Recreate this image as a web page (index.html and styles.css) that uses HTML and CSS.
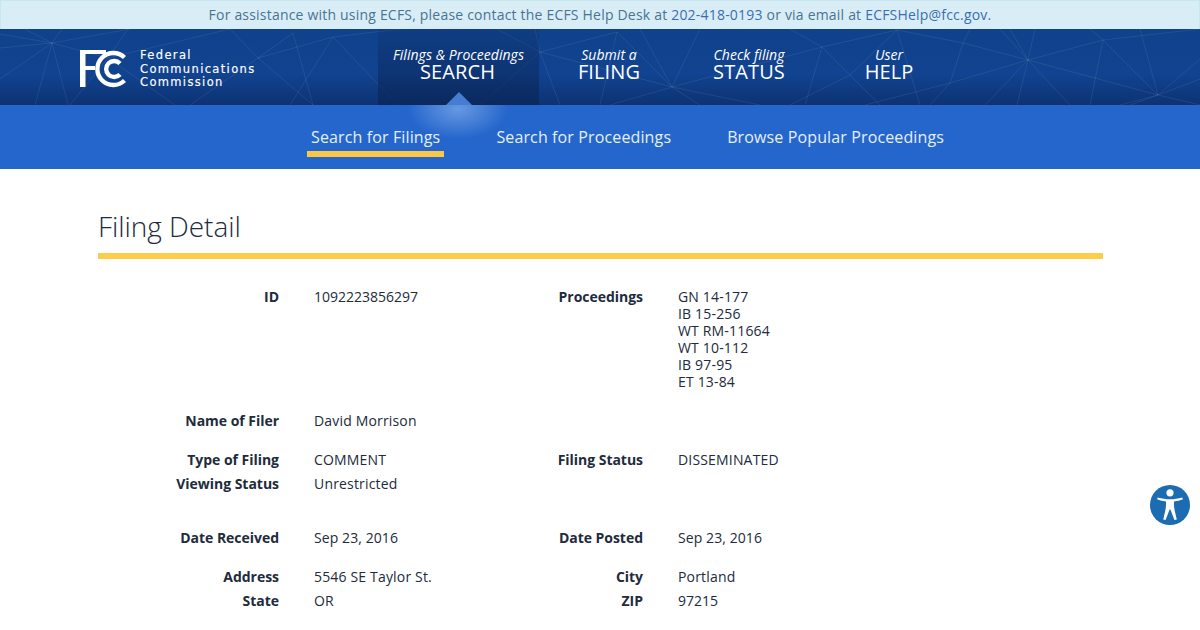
FILE: index.html
```html
<!DOCTYPE html>
<html>
  <head>
    <title>ECFS Filing Detail</title>
    <link rel="stylesheet" href="styles.css">
  </head>

  <body>
    <div class="help-bar">
      For assistance with using ECFS, please contact the ECFS Help Desk at <a href="#">202-418-0193</a> or via email at <a href="#">ECFSHelp@fcc.gov</a>.
    </div>

    <header class="top">
      <svg class="web" width="1200" height="76" viewBox="0 0 1200 76">
        <path d="M0 19 L52 14 L0 5 M52 14 L25 0 M52 14 L62 0 M52 14 L130 0 M52 14 L0 50 M52 14 L35 76 M52 14 L68 76 M52 14 L108 29 L70 76 M108 29 L128 0 M108 29 L175 76 M108 29 L230 0 M258 29 L230 0 M258 29 L293 4 M258 29 L333 8 M258 29 L190 76 M258 29 L313 76 M293 4 L313 76 M333 8 L290 76 M333 8 L398 76 M333 8 L400 0 M540 23 L497 0 M540 23 L617 3 M540 23 L672 58 M540 23 L480 76 M540 23 L560 76 M540 23 L535 0 M617 3 L672 58 M617 3 L600 76 M672 58 L700 0 M672 58 L640 0 M672 58 L610 76 M672 58 L700 76 M672 58 L760 76 M672 58 L822 18 M822 18 L790 0 M822 18 L897 1 M822 18 L850 46 M822 18 L805 76 M850 46 L897 1 M850 46 L790 76 M850 46 L880 76 M897 1 L920 76 M963 14 L897 1 M963 14 L950 54 M963 14 L970 0 M963 14 L1028 31 M950 54 L1028 31 M950 54 L930 76 M950 54 L865 76 M1028 31 L1010 0 M1028 31 L1035 0 M1028 31 L1000 0 M1028 31 L985 76 M1028 31 L1017 76 M1028 31 L1070 76 M1028 31 L1158 66 M1028 31 L1103 11 M1103 11 L1090 0 M1103 11 L1158 66 M1103 11 L1090 76 M1103 11 L1200 0 M1158 66 L1140 0 M1158 66 L1200 30 M1158 66 L1200 50 M1158 66 L1200 76 M1158 66 L1130 76 M1158 66 L1120 76"/>
      </svg>

      <div class="logo">
        <svg class="logo-mark" width="46" height="38" viewBox="0 0 46 38">
          <path class="logo-f" d="M0 0 H26 V4 H5.5 V16 H15 V20 H5.5 V37 H0 Z"/>
          <path class="logo-c" d="M44.5 7.5 A16 16 0 1 0 44.5 30.5"/>
          <path class="logo-c" d="M40 13.5 A8 8 0 1 0 40 24.5"/>
        </svg>
        <div class="logo-text">Federal<br>Communications<br>Commission</div>
      </div>

      <nav class="main-nav">
        <a class="main-tab main-tab-active" href="#"><i>Filings &amp; Proceedings</i><span>SEARCH</span></a>
        <a class="main-tab" href="#"><i>Submit a</i><span>FILING</span></a>
        <a class="main-tab" href="#"><i>Check filing</i><span>STATUS</span></a>
        <a class="main-tab" href="#"><i>User</i><span>HELP</span></a>
      </nav>
    </header>

    <nav class="sub-nav">
      <div class="sub-glow"></div>
      <a class="sub-link sub-link-active" href="#">Search for Filings</a>
      <a class="sub-link" href="#">Search for Proceedings</a>
      <a class="sub-link" href="#">Browse Popular Proceedings</a>
    </nav>

    <main class="content">
      <h1>Filing Detail</h1>

      <div class="details">
        <div class="label">ID</div>
        <div class="value num">1092223856297</div>
        <div class="label">Proceedings</div>
        <div class="value">GN 14-177<br>IB 15-256<br>WT RM-11664<br>WT 10-112<br>IB 97-95<br>ET 13-84</div>

        <div class="label gap-top">Name of Filer</div>
        <div class="value gap-top wide">David Morrison</div>

        <div class="label gap-top">Type of Filing</div>
        <div class="value gap-top">COMMENT</div>
        <div class="label gap-top">Filing Status</div>
        <div class="value gap-top">DISSEMINATED</div>

        <div class="label">Viewing Status</div>
        <div class="value wide">Unrestricted</div>

        <div class="label gap-big">Date Received</div>
        <div class="value date gap-big">Sep 23, 2016</div>
        <div class="label gap-big">Date Posted</div>
        <div class="value date gap-big">Sep 23, 2016</div>

        <div class="label gap-top">Address</div>
        <div class="value gap-top">5546 SE Taylor St.</div>
        <div class="label gap-top">City</div>
        <div class="value gap-top">Portland</div>

        <div class="label">State</div>
        <div class="value">OR</div>
        <div class="label">ZIP</div>
        <div class="value num">97215</div>
      </div>
    </main>

    <svg class="access" width="42" height="42" viewBox="0 0 42 42">
      <circle cx="21" cy="21" r="20.5" fill="#fff"/>
      <circle cx="21" cy="21" r="20" fill="#1b6cb0"/>
      <circle cx="21" cy="8.8" r="3.6" fill="#fff"/>
      <path fill="#fff" d="M8 15.2 L8.8 13.4 C13 14.6 17 15.2 21 15.2 C25 15.2 29 14.6 33.2 13.4 L34 15.2 C31 16.4 28 17.2 25 17.6 C24.8 21 25.2 24.5 25.8 27 L27.8 35.4 L25.4 36 L21.4 25.5 H20.6 L16.6 36 L14.2 35.4 L16.2 27 C16.8 24.5 17.2 21 17 17.6 C14 17.2 11 16.4 8 15.2 Z"/>
    </svg>
  </body>
</html>
```

FILE: styles.css
```css
body {
  margin: 0;
  height: 630px;
  overflow: hidden;
  position: relative;
  background: #fff;
  font-family: 'Open Sans', sans-serif;
  font-size: 14px;
  color: #212b3c;
}

a {
  text-decoration: none;
}

.help-bar {
  height: 29px;
  box-sizing: border-box;
  border: 1px solid #c6e6f0;
  border-bottom: none;
  background: #d9edf7;
  color: #4a7391;
  line-height: 28px;
  letter-spacing: 0.2px;
  text-align: center;
}

.help-bar a {
  color: #3a6eb0;
}

.top {
  position: relative;
  display: flex;
  height: 76px;
  padding-left: 80px;
  background: linear-gradient(#10418b, #114390 60%, #0d3272);
}

.web {
  position: absolute;
  top: 0;
  left: 0;
}

.web path {
  fill: none;
  stroke: #fff;
  stroke-opacity: 0.08;
  stroke-width: 1;
}

.logo {
  position: relative;
  display: flex;
  width: 298px;
  padding-top: 21px;
  box-sizing: border-box;
}

.logo-mark {
  flex: none;
}

.logo-f {
  fill: #fff;
}

.logo-c {
  fill: none;
  stroke: #fff;
  stroke-width: 4.4;
}

.logo-text {
  margin: -1px 0 0 14px;
  font-family: 'DejaVu Sans', sans-serif;
  font-size: 11.5px;
  line-height: 13.5px;
  letter-spacing: 1.35px;
  -webkit-text-stroke: 0.15px #fff;
  color: #fff;
}

.main-nav {
  position: relative;
  display: flex;
}

.main-tab {
  position: relative;
  display: flex;
  flex-direction: column;
  align-items: center;
  width: 140px;
  padding-top: 17px;
  box-sizing: border-box;
  color: #fff;
}

.main-tab i {
  font-size: 14px;
  line-height: 18px;
  letter-spacing: 0.05px;
}

.main-tab span {
  font-size: 20px;
  line-height: 16px;
  letter-spacing: 0.1px;
}

.main-tab-active {
  width: 161px;
  background: linear-gradient(rgba(13, 45, 100, 0.2), rgba(10, 38, 88, 0.75));
}

.main-tab-active span {
  margin-right: 2px;
}

.main-tab-active::after {
  content: "";
  position: absolute;
  left: 68px;
  bottom: 0;
  border-left: 13px solid transparent;
  border-right: 13px solid transparent;
  border-bottom: 13px solid #447dd2;
}

.sub-nav {
  position: relative;
  display: flex;
  gap: 48px;
  height: 64px;
  padding: 19px 0 0 307px;
  box-sizing: border-box;
  background: #2566cc;
}

.sub-glow {
  position: absolute;
  left: 403px;
  top: 0;
  width: 110px;
  height: 34px;
  background: radial-gradient(ellipse 50px 30px at center 4px, rgba(125, 170, 232, 0.75), rgba(125, 170, 232, 0));
}

.sub-link {
  position: relative;
  height: 33px;
  padding: 0 4px;
  font-size: 16px;
  line-height: 26px;
  letter-spacing: 0.13px;
  color: #e6effa;
}

.sub-link-active {
  height: 27px;
  border-bottom: 6px solid #fcc744;
}

.content {
  margin: 0 97px 0 98px;
}

h1 {
  margin: 0;
  padding: 39px 0 9px;
  border-bottom: 6px solid #fdcd4a;
  font-size: 28px;
  font-weight: 300;
  line-height: 36px;
  letter-spacing: -0.05px;
  color: #212b3c;
}

.details {
  display: grid;
  grid-template-columns: 181px 194px 100px 1fr;
  column-gap: 35px;
  row-gap: 7px;
  padding-top: 29px;
  line-height: 17px;
}

.label {
  font-weight: 700;
  letter-spacing: -0.03px;
  text-align: right;
}

.value {
  letter-spacing: 0.17px;
}

.value.num {
  letter-spacing: 0;
}

.value.date {
  letter-spacing: 0.08px;
}

.wide {
  grid-column: 2 / 5;
}

.gap-top {
  margin-top: 15px;
}

.gap-big {
  margin-top: 30px;
}

.access {
  position: absolute;
  left: 1149px;
  top: 484px;
}
```
